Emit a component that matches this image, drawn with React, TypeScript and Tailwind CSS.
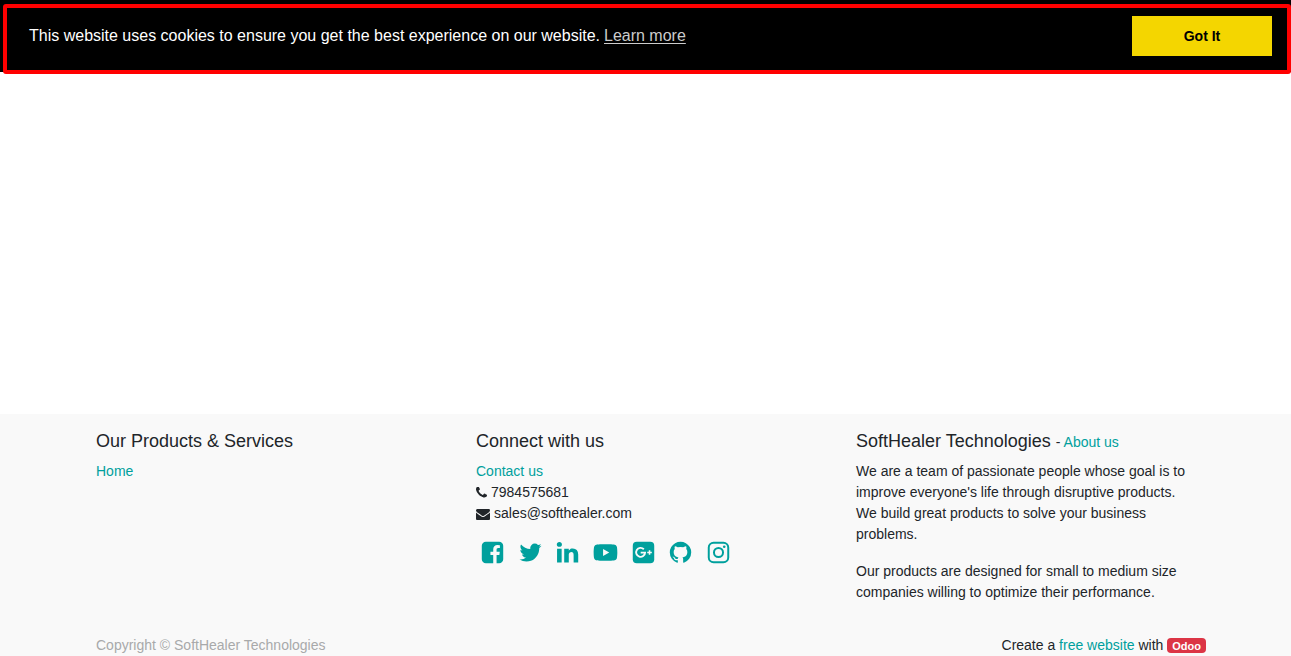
import React from "react";
import { FaYoutube } from "react-icons/fa";

const PATHS = {
  facebook:
    "M1376 128q119 0 203.5 84.5t84.5 203.5v960q0 119-84.5 203.5t-203.5 84.5h-188v-595h199l30-232h-229v-148q0-56 23.5-84t91.5-28l122-1v-207q-63-9-178-9-136 0-217.5 80t-81.5 226v171h-200v232h200v595h-532q-119 0-203.5-84.5t-84.5-203.5v-960q0-119 84.5-203.5t203.5-84.5h960z",
  twitter:
    "M1684 408q-67 98-162 167 1 14 1 42 0 130-38 259.5t-115.5 248.5-184.5 210.5-258 146-323 54.5q-271 0-496-145 35 4 78 4 225 0 401-138-105-2-188-64.5t-114-159.5q33 5 61 5 43 0 85-11-112-23-185.5-111.5t-73.5-205.5v-4q68 38 146 41-66-44-105-115t-39-154q0-88 44-163 121 149 294.5 238.5t371.5 99.5q-8-38-8-74 0-134 94.5-228.5t228.5-94.5q140 0 236 102 109-21 205-78-37 115-142 178 93-10 186-50z",
  linkedin:
    "M477 625v991h-330v-991h330zm21-306q1 73-50.5 122t-135.5 49h-2q-82 0-132-49t-50-122q0-74 51.5-122.5t134.5-48.5 133 48.5 51 122.5zm1166 729v568h-329v-530q0-105-40.5-164.5t-126.5-59.5q-63 0-105.5 34.5t-63.5 85.5q-11 30-11 81v553h-329q2-399 2-647t-1-296l-1-48h329v144h-2q20-32 41-56t56.5-52 87-43.5 114.5-15.5q171 0 275 113.5t104 332.5z",
  github:
    "M896 128q209 0 385.5 103t279.5 279.5 103 385.5q0 251-146.5 451.5t-378.5 277.5q-27 5-40-7t-13-30q0-3 .5-76.5t.5-134.5q0-97-52-142 57-6 102.5-18t94-39 81-66.5 53-105 20.5-150.5q0-119-79-206 37-91-8-204-28-9-81 11t-92 44l-38 24q-93-26-192-26t-192 26q-16-11-42.5-27t-83.5-38.5-85-13.5q-45 113-8 204-79 87-79 206 0 85 20.5 150t52.5 105 80.5 67 94 39 102.5 18q-39 36-49 103-21 10-45 15t-57 5-65.5-21.5-55.5-62.5q-19-32-48.5-52t-49.5-24l-20-3q-21 0-29 4.5t-5 11.5 9 14 13 12l7 5q22 10 43.5 38t31.5 51l10 23q13 38 44 61.5t67 30 69.5 7 55.5-3.5l23-4q0 38 .5 88.5t.5 54.5q0 18-13 30t-40 7q-232-77-378.5-277.5t-146.5-451.5q0-209 103-385.5t279.5-279.5 385.5-103z",
  phone:
    "M1600 1240q0 27-10 70.5t-21 68.5q-21 50-122 106-94 51-186 51-27 0-53-3.5t-57.5-12.5-47-14.5-55.5-20.5-49-18q-98-35-175-83-127-79-264-216t-216-264q-48-77-83-175-3-9-18-49t-20.5-55.5-14.5-47-12.5-57.5-3.5-53q0-92 51-186 56-101 106-122 25-11 68.5-21t70.5-10q14 0 21 3 18 6 53 76 11 19 30 54t35 63.5 31 53.5q3 4 17.5 25t21.5 35.5 7 28.5q0 20-28.5 50t-62 55-62 53-28.5 46q0 9 5 22.5t8.5 20.5 14 24 11.5 19q76 137 174 235t235 174q2 1 19 11.5t24 14 20.5 8.5 22.5 5q18 0 46-28.5t53-62 55-62 50-28.5q14 0 28.5 7t35.5 21.5 25 17.5q25 15 53.5 31t63.5 35 54 30q70 35 76 53 3 7 3 21z",
  envelope:
    "M1792 710v794q0 66-47 113t-113 47h-1472q-66 0-113-47t-47-113v-794q44 49 101 87 362 246 497 345 57 42 92.5 65.5t94.5 48 110 24.5h2q51 0 110-24.5t94.5-48 92.5-65.5q170-123 498-345 57-39 100-87zm0-294q0 79-49 151t-122 123q-376 261-468 325-10 7-42.5 31t-54 38.5-52 32.5-57.5 27-50 9h-2q-23 0-50-9t-57.5-27-52-32.5-54-38.5-42.5-31q-91-64-262-182.5t-205-142.5q-62-42-117-115.5t-55-136.5q0-78 41.5-130t118.5-52h1472q65 0 112.5 47t47.5 113z",
};

function Glyph({ d, className }: { d: string; className: string }) {
  return (
    <svg viewBox="0 0 1792 1792" fill="currentColor" className={className} aria-hidden="true">
      <path d={d} />
    </svg>
  );
}

function GooglePlus() {
  return (
    <svg viewBox="0 0 24 24" className="h-[25px] w-[25px]" fill="none" aria-hidden="true">
      <rect x="1.7" y="1.7" width="20.6" height="20.6" rx="3.8" fill="currentColor" />
      <path
        d="M12.3 8.9A4.3 4.3 0 1 0 13.5 12.1H9.3"
        stroke="#f9f9f9"
        strokeWidth="1.8"
      />
      <path d="M17.8 9.8v4.4M15.6 12h4.4" stroke="#f9f9f9" strokeWidth="1.5" />
    </svg>
  );
}

function Instagram() {
  return (
    <svg viewBox="0 0 24 24" className="h-[25px] w-[25px]" fill="none" stroke="currentColor" aria-hidden="true">
      <rect x="2.65" y="2.65" width="18.7" height="18.7" rx="4.6" strokeWidth="1.9" />
      <circle cx="12" cy="12" r="4.35" strokeWidth="1.9" />
      <circle cx="17.5" cy="6.5" r="1.25" fill="currentColor" stroke="none" />
    </svg>
  );
}

const big = "h-[25px] w-[25px]";

const SOCIAL = [
  { name: "Facebook", icon: <Glyph d={PATHS.facebook} className={big} /> },
  { name: "Twitter", icon: <Glyph d={PATHS.twitter} className={big} /> },
  { name: "LinkedIn", icon: <Glyph d={PATHS.linkedin} className={big} /> },
  { name: "YouTube", icon: <FaYoutube className={big} /> },
  { name: "Google Plus", icon: <GooglePlus /> },
  { name: "GitHub", icon: <Glyph d={PATHS.github} className={big} /> },
  { name: "Instagram", icon: <Instagram /> },
];

function CookieBar() {
  return (
    <header className="relative flex items-start justify-between bg-black py-4 pr-[19px] pl-[29px]">
      <p className="pt-2 text-base leading-6 text-white">
        This website uses cookies to ensure you get the best experience on our website.
        <a href="#learn" className="ml-1 text-[#cccccc] underline underline-offset-2">
          Learn more
        </a>
      </p>
      <button type="button" className="h-10 w-[140px] shrink-0 bg-[#f4d600] text-sm font-bold text-black">
        Got It
      </button>
      <div className="pointer-events-none absolute top-1 right-0 -bottom-0.5 left-[3px] rounded-[3px] border-4 border-[#ff0000]" />
    </header>
  );
}

const heading = "mb-2 text-lg leading-[23px]";
const link = "text-[#00a09d]";

function Footer() {
  return (
    <footer className="bg-[#f9f9f9] pt-4 pl-[11px]">
      <div className="mx-auto max-w-[1140px] px-[15px]">
        <div className="grid grid-cols-3 gap-[30px]">
          <section>
            <h2 className={heading}>Our Products &amp; Services</h2>
            <a href="#home" className={link}>Home</a>
          </section>
          <section>
            <h2 className={heading}>Connect with us</h2>
            <ul>
              <li>
                <a href="#contact" className={link}>Contact us</a>
              </li>
              <li className="flex items-center gap-1">
                <svg viewBox="192 192 1408 1408" fill="currentColor" className="h-[11px] w-[11px]" aria-hidden="true">
                  <path d={PATHS.phone} />
                </svg>
                7984575681
              </li>
              <li className="flex items-center gap-1">
                <Glyph d={PATHS.envelope} className="h-[14px] w-[14px]" />
                sales@softhealer.com
              </li>
            </ul>
            <nav className="mt-4 ml-1 flex w-[251px] justify-between text-[#00a09d]" aria-label="Social">
              {SOCIAL.map((s) => (
                <a key={s.name} href="#social" aria-label={s.name}>
                  {s.icon}
                </a>
              ))}
            </nav>
          </section>
          <section>
            <h2 className={heading}>
              SoftHealer Technologies{" "}
              <span className="text-sm leading-none">
                - <a href="#about" className={link}>About us</a>
              </span>
            </h2>
            <div className="max-w-[340px] space-y-4">
              <p>
                We are a team of passionate people whose goal is to improve everyone's life through
                disruptive products. We build great products to solve your business problems.
              </p>
              <p>
                Our products are designed for small to medium size companies willing to optimize their
                performance.
              </p>
            </div>
          </section>
        </div>
        <div className="mt-8 flex justify-between">
          <span className="text-[#a8a9aa]">Copyright © SoftHealer Technologies</span>
          <span>
            Create a <a href="#free" className={link}>free website</a> with{" "}
            <a
              href="#odoo"
              className="inline-block rounded bg-[#dc3545] px-[5px] pt-0.5 pb-px text-[11px] leading-3 font-bold text-white"
            >
              Odoo
            </a>
          </span>
        </div>
      </div>
    </footer>
  );
}

export default function App() {
  return (
    <div className="flex min-h-screen flex-col bg-white font-['Liberation_Sans',Arial,sans-serif] text-sm leading-[21px] text-[#212529]">
      <CookieBar />
      <main className="flex-1" />
      <Footer />
    </div>
  );
}
